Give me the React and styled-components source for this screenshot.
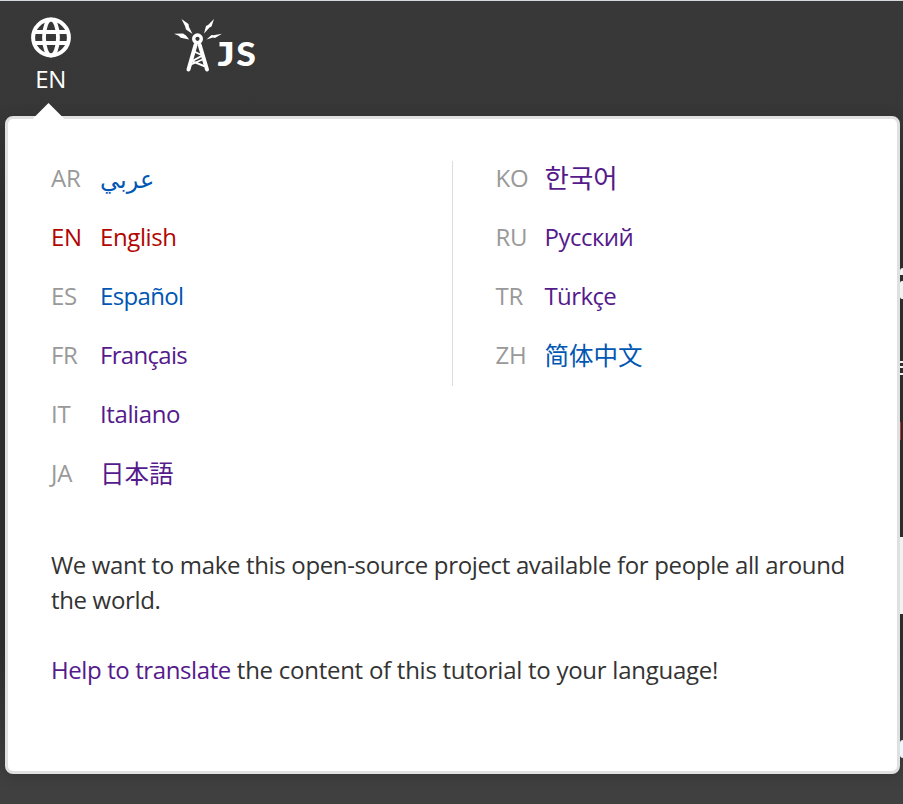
import React from "react";
import styled, { createGlobalStyle } from "styled-components";

const Global = createGlobalStyle`
  *, *::before, *::after { box-sizing: border-box; }
  html, body { margin: 0; background: #3b3b3b; overflow: hidden; }
`;

const Page = styled.div`
  width: 903px;
  height: 804px;
  overflow: hidden;
  border-top: 1px solid #d4d7dc;
  background: linear-gradient(#383838 0, #373737 120px, #303030 200px, #303030 640px, #404040 780px, #404040 100%);
  color: #333;
  font: 24px/35px "Open Sans", "Noto Sans", "Noto Sans CJK SC", sans-serif;
`;

const Header = styled.header`
  display: flex;
  align-items: flex-start;
  gap: 102px;
  height: 115px;
  padding: 16px 0 0 30px;
`;

const LanguageButton = styled.div`
  display: flex;
  flex-direction: column;
  align-items: center;
  gap: 2px;
  width: 42px;
  color: #fff;
`;

const Code = styled.span`
  padding-right: 1px;
  letter-spacing: -0.5px;
`;

const Body = styled.div`
  display: flex;
  padding-left: 5px;
`;

const Panel = styled.main`
  position: relative;
  display: flex;
  flex-direction: column;
  flex: none;
  width: 895px;
  height: 658px;
  padding: 42px 43px 0;
  border: 3px solid #e0e0e0;
  border-radius: 8px;
  background: #fff;
  box-shadow: 0 3px 16px rgba(0, 0, 0, 0.15);
`;

const Pointer = styled.svg`
  position: absolute;
  left: 25px;
  top: -17px;
`;

const Languages = styled.div`
  display: grid;
  grid-template-columns: 401px 1fr;
  align-items: start;
  height: 386px;
`;

const Column = styled.div`
  display: flex;
  flex-direction: column;
  gap: 24px;
  ${(p) =>
    p.$divided &&
    `
    height: 225px;
    padding-left: 42.5px;
    border-left: 1px solid #ddd;
  `}
`;

const Row = styled.div`
  display: grid;
  grid-template-columns: 49px auto;
  justify-content: start;
  height: 35px;
  line-height: 33px;
  color: ${(p) => (p.$active ? "#b20600" : "#999")};
`;

const Abbr = styled.span`
  letter-spacing: -0.3px;
`;

const tones = { blue: "#0056b3", red: "#b20600", purple: "#551a8b" };

const Name = styled.a`
  height: 35px;
  color: ${(p) => tones[p.$tone]};
  font-family: ${(p) => p.$font || "inherit"};
  font-size: ${(p) => p.$size || 24}px;
  line-height: ${(p) => p.$line || 33}px;
  letter-spacing: ${(p) => p.$track || 0}px;
  white-space: nowrap;
`;

const Notes = styled.div`
  display: flex;
  flex-direction: column;
  gap: 35px;
`;

const Paragraph = styled.p`
  margin: 0;
  white-space: nowrap;
  letter-spacing: ${(p) => p.$track}px;
`;

const Link = styled.a`
  color: #551a8b;
  letter-spacing: -0.4px;
`;

const Edge = styled.aside`
  position: relative;
  display: grid;
  flex: none;
  width: 3px;
  height: 658px;
  grid-template-rows:
    [heading] 7px 6px [stem] 18px 62px
    [line1] 2px 3px [line2] 2px 5px [line3] 2px 47px
    [accent] 18px 97px [card] 77px 126px [dot] 18px;
  padding-top: 152px;
`;

const Sliver = styled.div`
  grid-row: ${(p) => p.$row};
  width: ${(p) => p.$w || 3}px;
  border-radius: ${(p) => p.$round || 0};
  background: ${(p) => p.$color || "#f2f2f2"};
`;

const slivers = [
  { row: "heading", round: "3px 0 0 0" },
  { row: "stem", round: "2px 0 0 2px" },
  { row: "line1" },
  { row: "line2" },
  { row: "line3" },
  { row: "accent", w: 1, color: "#b33c3c" },
  { row: "card" },
  { row: "dot", round: "8px 0 0 8px", color: "#eef6ff" },
];

const left = [
  { code: "AR", name: "عربي", tone: "blue", font: '"DejaVu Sans"', size: 24, line: 38 },
  { code: "EN", name: "English", tone: "red", track: -0.4 },
  { code: "ES", name: "Español", tone: "blue", track: -0.65 },
  { code: "FR", name: "Français", tone: "purple", track: -0.7 },
  { code: "IT", name: "Italiano", tone: "purple", track: -0.4 },
  { code: "JA", name: "日本語", tone: "purple", font: '"Noto Sans CJK JP"', size: 24.5 },
];
const right = [
  { code: "KO", name: "한국어", tone: "purple", font: '"Noto Sans CJK KR"', size: 26.5, line: 31 },
  { code: "RU", name: "Русский", tone: "purple", track: -0.5 },
  { code: "TR", name: "Türkçe", tone: "purple", track: -0.6 },
  { code: "ZH", name: "简体中文", tone: "blue", font: '"Noto Sans CJK SC"', size: 24.5, line: 33 },
];

const List = ({ items, divided }) => (
  <Column $divided={divided}>
    {items.map((l) => (
      <Row key={l.code} $active={l.code === "EN"}>
        <Abbr>{l.code}</Abbr>
        <Name
          $tone={l.tone}
          $font={l.font && `${l.font}, sans-serif`}
          $size={l.size}
          $line={l.line}
          $track={l.track}
        >
          {l.name}
        </Name>
      </Row>
    ))}
  </Column>
);

const Globe = () => (
  <svg width="42" height="42" viewBox="0 0 42 42" fill="none" stroke="#fff" strokeWidth="4">
    <circle cx="21" cy="20.500" r="17.900" />
    <ellipse cx="21" cy="20.500" rx="7" ry="18" strokeWidth="3.800" />
    <path d="M4 15h34M4 26h34" />
  </svg>
);

const Logo = () => (
  <svg width="84" height="58" viewBox="174 17 84 58" fill="#fff">
    <path d="M174 33.700l9-.2 3 2 3.200 4-8.500-1.700-2-2zM181.500 19l7 5 .5 3 3.500 7-6.500-4.500-1-3.500zM214 19l-2.500 7.500-2 1-5.500 6 2-7.500 2-1zM222 33.700l-7 4.300-2-.4-6.500 1.900 5-4.500 2 .2z" />
    <circle cx="197.500" cy="38.800" r="3.800" fill="none" stroke="#fff" strokeWidth="3.400" />
    <g fill="none" stroke="#fff" strokeLinecap="round">
      <path d="M195.500 45l-7 24.500M199.700 45l7.300 24.500" strokeWidth="4" />
      <path d="M194 51.500l8.500 4-10.500 5.700 12 4.800M191 64.500l11.500-5" strokeWidth="1.900" />
    </g>
    <rect x="219.500" y="42" width="11" height="4.400" />
    <text transform="translate(217.500 65.500) scale(1.22 1)" fontFamily="Lato" fontWeight="900" fontSize="33">J</text>
    <text transform="translate(236.300 65.500) scale(1.08 1)" fontFamily="Lato" fontWeight="900" fontSize="33">S</text>
  </svg>
);

export default function App() {
  return (
    <Page>
      <Global />
      <Header>
        <LanguageButton>
          <Globe />
          <Code>EN</Code>
        </LanguageButton>
        <Logo />
      </Header>
      <Body>
        <Panel>
          <Pointer width="32" height="18" viewBox="0 0 32 18">
            <path d="M15.500 1L31 16.500V18H0V16.500Z" fill="#fff" />
          </Pointer>
          <Languages>
            <List items={left} />
            <List items={right} divided />
          </Languages>
          <Notes>
            <Paragraph $track={-0.34}>
              We want to make this open-source project available for people all around
              <br />
              the world.
            </Paragraph>
            <Paragraph $track={-0.26}>
              <Link>Help to translate</Link> the content of this tutorial to your language!
            </Paragraph>
          </Notes>
        </Panel>
        <Edge>
          {slivers.map((s) => (
            <Sliver key={s.row} $row={s.row} $w={s.w} $round={s.round} $color={s.color} />
          ))}
        </Edge>
      </Body>
    </Page>
  );
}
